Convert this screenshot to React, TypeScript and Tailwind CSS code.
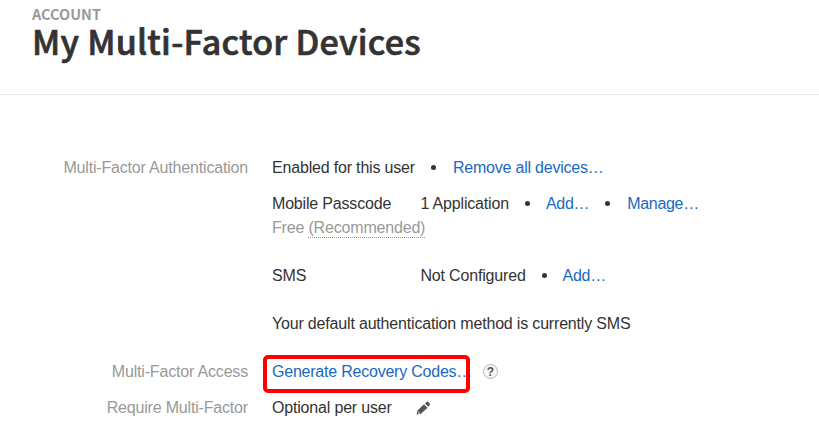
const Dot = () => <span className="relative -top-px mx-4 h-[5px] w-[5px] rounded-full bg-[#333]" />;

const Label = ({ children }: { children?: string }) => (
  <div className="w-[248px] shrink-0 text-right text-[#999]">{children}</div>
);

export default function App() {
  return (
    <div className="h-[444px] overflow-hidden bg-white font-['Liberation_Sans',Arial,sans-serif] text-base leading-6 tracking-[-0.18px] text-[#333]">
      <header className="h-[95px] border-b border-[#ececec] pl-8 pt-1 font-['Noto_Sans_CJK_JP',sans-serif] tracking-normal">
        <div className="text-[14.5px] font-semibold leading-5 text-[#999]">ACCOUNT</div>
        <h1 className="text-[34px] font-medium leading-[34px] tracking-[0.26px] text-[#333] [-webkit-text-stroke:0.7px_#333]">My Multi-Factor Devices</h1>
      </header>
      <main className="pt-[61px]">
        <div className="flex h-9">
          <Label>Multi-Factor Authentication</Label>
          <div className="ml-6 flex h-6 items-center whitespace-nowrap">
            <span>Enabled for this user</span>
            <Dot />
            <a className="ml-px tracking-[-0.22px] text-[#1a69c0]">Remove all devices…</a>
          </div>
        </div>
        <div className="flex h-[72px]">
          <Label />
          <div className="ml-6 w-[148.5px] whitespace-nowrap">
            <div>Mobile Passcode</div>
            <div className="text-[#999]">Free <span className="inline-block h-[22px] border-b border-dotted border-[#999]">(Recommended)</span></div>
          </div>
          <div className="flex h-6 items-center">
            <span>1 Application</span><Dot />
            <a className="tracking-[-0.3px] text-[#1a69c0]">Add…</a><Dot />
            <a className="ml-px tracking-[-0.3px] text-[#1a69c0]">Manage…</a>
          </div>
        </div>
        <div className="flex h-12">
          <Label />
          <div className="ml-6 w-[148.5px]">SMS</div>
          <div className="flex h-6 items-center">
            <span>Not Configured</span><Dot />
            <a className="tracking-[-0.3px] text-[#1a69c0]">Add…</a>
          </div>
        </div>
        <div className="ml-[272px] h-12">Your default authentication method is currently SMS</div>
        <div className="flex h-9">
          <Label>Multi-Factor Access</Label>
          <div className="relative ml-6 w-[198px] whitespace-nowrap tracking-[-0.22px] text-[#1a69c0]">
            Generate Recovery Codes…
            <span className="absolute -left-[9px] -top-[5px] h-[38px] w-[207px] rounded-[5px] border-4 border-[#f00]" />
          </div>
          <div className="ml-[13px] mt-1 flex h-[15px] w-[15px] items-center justify-center rounded-full border border-[#b5b5b5] bg-[#f7f7f7] text-[12px] font-bold leading-none tracking-normal text-[#555]">?</div>
        </div>
        <div className="flex h-6">
          <Label>Require Multi-Factor</Label>
          <span className="ml-6">Optional per user</span>
          <svg className="ml-[24px] mt-[5px]" width="15" height="15" viewBox="0 0 15 15" fill="#555"><path d="M.5 13.6 1.5 9.5 8 3.2 11.5 6.7 5 12.8ZM9 2.4 10.5.9Q11.3.2 12.2.9L13.7 2.4Q14.4 3.3 13.6 4.2L12.2 5.7Z" /><path d="M2 10.3 4.3 12.3 2 12.7Z" fill="#ccc" /></svg>
        </div>
      </main>
    </div>
  );
}
